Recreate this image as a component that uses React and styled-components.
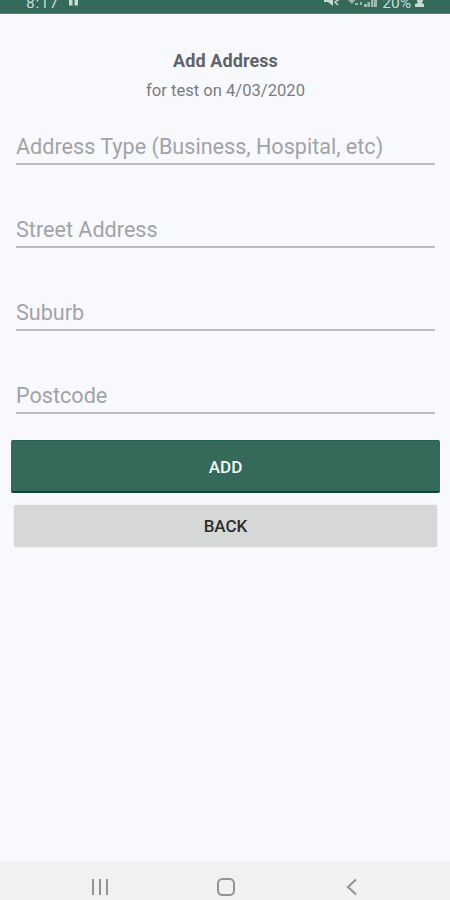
import React from 'react';
import styled, { createGlobalStyle } from 'styled-components';

const GlobalStyle = createGlobalStyle`
  * { box-sizing: border-box; }
  body { margin: 0; background: #f8f9fd; font-family: Roboto, sans-serif; }
`;

const Screen = styled.div`
  display: flex;
  flex-direction: column;
  width: 450px;
  height: 900px;
  overflow: hidden;
  background: #f8f9fd;
`;

const StatusBar = styled.header`
  display: flex;
  align-items: flex-end;
  justify-content: space-between;
  flex: none;
  height: 14px;
  padding: 0 25px 5px 26px;
  overflow: hidden;
  background: #356a5a;
  border-bottom: 1px solid #568174;
  color: #c9dcd4;
`;

const StatusGroup = styled.div`
  display: flex;
  align-items: flex-end;
  gap: ${({ $gap }) => $gap}px;
`;

const StatusText = styled.span`
  height: 11px;
  font-size: 15.5px;
  line-height: 12px;
  letter-spacing: ${({ $spacing }) => $spacing || 0}px;
`;

const StatusIcon = styled.svg`
  display: block;
  flex: none;
`;

const Content = styled.main`
  display: flex;
  flex: 1;
  flex-direction: column;
  padding: 35px 10px 0 11px;
`;

const Title = styled.h1`
  margin: 0;
  color: #626368;
  font-size: 18px;
  font-weight: 700;
  line-height: 24px;
  letter-spacing: 0.1px;
  text-align: center;
`;

const Subtitle = styled.p`
  margin: 6px 0 0;
  color: #7b7c80;
  font-size: 16.6px;
  line-height: 24px;
  text-align: center;
`;

const Form = styled.form`
  display: flex;
  flex-direction: column;
`;

const Fields = styled.div`
  display: flex;
  flex-direction: column;
  gap: 49px;
  margin: 28px 5px 26px;
`;

const Field = styled.label`
  display: flex;
  align-items: center;
  height: 34px;
  padding-bottom: 1px;
  border-bottom: 2px solid #bcbdc0;
  color: #a2a3a6;
  font-size: 21.6px;
  white-space: nowrap;
`;

const Button = styled.button`
  display: block;
  padding: 0;
  border: 0;
  border-radius: 2px;
  font-family: inherit;
  font-size: 17px;
  font-weight: 500;
`;

const PrimaryButton = styled(Button)`
  height: 53px;
  padding-top: 2px;
  background: #356a5a;
  border-top: 1px solid #246150;
  border-bottom: 2px solid #07483a;
  color: #f3f8f6;
`;

const SecondaryButton = styled(Button)`
  height: 42px;
  margin: 12px 3px 0;
  background: #d6d8d7;
  box-shadow: 0 0 2px #d6d8d7;
  color: #2b2d2c;
`;

const NavBar = styled.nav`
  display: grid;
  grid-template-columns: repeat(3, 126px);
  justify-content: center;
  justify-items: center;
  flex: none;
  height: 39px;
  padding-top: 16px;
  padding-left: 1px;
  background: #f1f1f1;
  border-top: 1px solid #f3f5f4;
`;

const NavIcon = styled.svg`
  display: block;
  fill: none;
  stroke: #929394;
  stroke-width: 2;
`;

const fields = [
  'Address Type (Business, Hospital, etc)',
  'Street Address',
  'Suburb',
  'Postcode',
];

export default function App() {
  return (
    <>
      <GlobalStyle />
      <Screen>
        <StatusBar>
          <StatusGroup $gap={10}>
            <StatusText $spacing={0.8}>8:17</StatusText>
            <StatusIcon width="10" height="9" viewBox="0 0 10 9" fill="currentColor">
              <path d="M0 0h3.5v6.500H0zM5.500 0H9v6.500H5.500z" />
            </StatusIcon>
          </StatusGroup>
          <StatusGroup $gap={4}>
            <StatusIcon width="54" height="12" viewBox="0 0 54 12" fill="currentColor">
              <path d="M0 3h4l5-4v11L4 6H0z" />
              <path d="M11 2l3 2-3 2 3 3" fill="none" stroke="currentColor" strokeWidth="1.5" />
              <path d="M23 3q5-3 9 0l-4 5zM31 7h3v2h-3zM36 6h2v3h-2z" opacity=".7" />
              <path d="M40 8h3v3h-3zM43.5 6H46v5h-2.500zM47 4h2v7h-2zM49.500 1H53v10h-3.500z" opacity=".7" />
            </StatusIcon>
            <StatusText>20%</StatusText>
            <StatusIcon width="10" height="12" viewBox="0 0 10 12" fill="currentColor">
              <path d="M2 0h6v5L6.500 7 9 8v3H0V8l3-1-1-2z" />
            </StatusIcon>
          </StatusGroup>
        </StatusBar>
        <Content>
          <Title>Add Address</Title>
          <Subtitle>for test on 4/03/2020</Subtitle>
          <Form>
            <Fields>
              {fields.map((name) => (
                <Field key={name}>{name}</Field>
              ))}
            </Fields>
            <PrimaryButton type="button">ADD</PrimaryButton>
            <SecondaryButton type="button">BACK</SecondaryButton>
          </Form>
        </Content>
        <NavBar>
          <NavIcon width="18" height="18" viewBox="0 0 18 18">
            <path d="M2 1v16M9 1v16M16 1v16" />
          </NavIcon>
          <NavIcon width="18" height="18" viewBox="0 0 18 18">
            <rect x="1" y="1" width="16" height="16" rx="4.5" />
          </NavIcon>
          <NavIcon width="18" height="18" viewBox="0 0 18 18">
            <path d="M13 1.500L5 9l8 7.500" />
          </NavIcon>
        </NavBar>
      </Screen>
    </>
  );
}
